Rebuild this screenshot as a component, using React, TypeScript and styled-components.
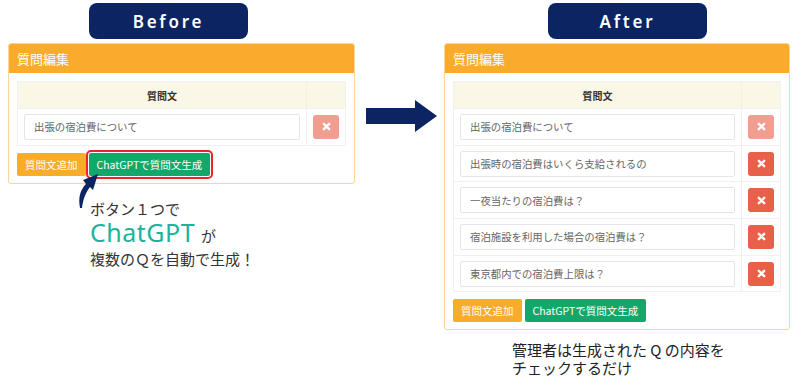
import React from "react";
import styled, { createGlobalStyle } from "styled-components";

const GlobalStyle = createGlobalStyle`
  body {
    margin: 0;
    background: #ffffff;
    font-family: "Noto Sans CJK JP", "Noto Sans", sans-serif;
  }
`;

const Page = styled.div`
  width: 800px;
  height: 380px;
  display: flex;
  align-items: flex-start;
  padding-top: 3px;
  box-sizing: border-box;
  overflow: hidden;
`;

const Column = styled.div<{ $left: number; $width: number }>`
  margin-left: ${(p) => p.$left}px;
  width: ${(p) => p.$width}px;
  display: flex;
  flex-direction: column;
`;

const Badge = styled.div<{ $offset: number }>`
  margin-left: ${(p) => p.$offset}px;
  width: 159px;
  height: 36px;
  border-radius: 8px;
  background: #0c2462;
  color: #ffffff;
  display: flex;
  align-items: center;
  justify-content: center;
  font-family: "Noto Sans", sans-serif;
  font-weight: 600;
  font-size: 17px;
  letter-spacing: 2.8px;
`;

const Panel = styled.div`
  margin-top: 4px;
  border: 1px solid #fad69c;
  border-radius: 3px;
  background: #ffffff;
  overflow: hidden;
`;

const PanelHeader = styled.div`
  height: 29px;
  background: #f9ab2b;
  color: #ffffff;
  font-size: 13px;
  display: flex;
  align-items: center;
  padding-left: 8px;
`;

const PanelBody = styled.div`
  padding: 8px 8px 7px;
`;

const Table = styled.div`
  border: 1px solid #f1f1f1;
  border-bottom: none;
  display: grid;
  grid-template-columns: 1fr 39px;
`;

const HeadCell = styled.div<{ $divider?: boolean }>`
  height: 26px;
  background: #fbf7e7;
  display: flex;
  align-items: center;
  justify-content: center;
  font-size: 10px;
  font-weight: 700;
  color: #333333;
  border-left: ${(p) => (p.$divider ? "1px solid #f4f0df" : "none")};
`;

const Cell = styled.div<{ $divider?: boolean }>`
  height: 35.7px;
  border-top: 1px solid #f0f0f0;
  border-bottom: 0;
  border-left: ${(p) => (p.$divider ? "1px solid #f0f0f0" : "none")};
  display: flex;
  align-items: center;
  justify-content: center;
  padding: 0 6px;
`;

const TableEnd = styled.div`
  grid-column: 1 / -1;
  height: 1px;
  background: #f0f0f0;
`;

const Input = styled.div`
  flex: 1;
  height: 24px;
  border: 1px solid #e3e5ec;
  border-radius: 2px;
  display: flex;
  align-items: center;
  padding-left: 9px;
  font-size: 10.4px;
  color: #666666;
  white-space: nowrap;
`;

const DeleteButton = styled.div<{ $faded?: boolean }>`
  width: 26px;
  height: 24px;
  flex: none;
  border-radius: 3px;
  background: ${(p) => (p.$faded ? "#f19e91" : "#e9604a")};
  display: flex;
  align-items: center;
  justify-content: center;
`;

const Actions = styled.div`
  display: flex;
  gap: 3px;
  margin-top: 7px;
`;

const ActionButton = styled.div<{ $tone: "orange" | "green"; $marked?: boolean }>`
  height: 23px;
  padding: 0 8px;
  border-radius: 2px;
  background: ${(p) => (p.$tone === "orange" ? "#f9ab2b" : "#13a86a")};
  color: #ffffff;
  font-size: 10.5px;
  display: flex;
  align-items: center;
  white-space: nowrap;
  outline: ${(p) => (p.$marked ? "2px solid #e8262a" : "none")};
  outline-offset: 1px;
`;

const Callout = styled.div`
  position: relative;
  margin-top: 15px;
  margin-left: 82px;
  color: #333333;
  font-size: 15px;
`;

const CalloutLine = styled.div`
  line-height: 20px;
`;

const BigLine = styled.div`
  line-height: 26px;
  display: flex;
  align-items: baseline;
  gap: 6px;
`;

const Teal = styled.span`
  font-family: "Noto Sans", sans-serif;
  font-size: 25px;
  color: #1ab39c;
  letter-spacing: 0.5px;
`;

const PointerArrow = styled.svg`
  position: absolute;
  left: -12px;
  top: -31px;
`;

const ArrowBox = styled.div`
  margin-left: 11px;
  margin-top: 97px;
  width: 72px;
  height: 32px;
`;

const Note = styled.div`
  margin-top: 11px;
  margin-left: 68px;
  font-size: 15px;
  line-height: 18px;
  color: #222222;
`;

const Cross = () => (
  <svg width="9" height="9" viewBox="0 0 10 10">
    <path d="M2 2 L8 8 M8 2 L2 8" stroke="#ffffff" strokeWidth="2.6" strokeLinecap="round" />
  </svg>
);

type Row = { text: string; faded?: boolean };

const EditorPanel = ({ rows, marked }: { rows: Row[]; marked?: boolean }) => (
  <Panel>
    <PanelHeader>質問編集</PanelHeader>
    <PanelBody>
      <Table>
        <HeadCell>質問文</HeadCell>
        <HeadCell $divider />
        {rows.map((row) => (
          <React.Fragment key={row.text}>
            <Cell>
              <Input>{row.text}</Input>
            </Cell>
            <Cell $divider>
              <DeleteButton $faded={row.faded}>
                <Cross />
              </DeleteButton>
            </Cell>
          </React.Fragment>
        ))}
        <TableEnd />
      </Table>
      <Actions>
        <ActionButton $tone="orange">質問文追加</ActionButton>
        <ActionButton $tone="green" $marked={marked}>
          ChatGPTで質問文生成
        </ActionButton>
      </Actions>
    </PanelBody>
  </Panel>
);

const beforeRows: Row[] = [{ text: "出張の宿泊費について", faded: true }];

const afterRows: Row[] = [
  { text: "出張の宿泊費について", faded: true },
  { text: "出張時の宿泊費はいくら支給されるの" },
  { text: "一夜当たりの宿泊費は？" },
  { text: "宿泊施設を利用した場合の宿泊費は？" },
  { text: "東京都内での宿泊費上限は？" },
];

export default function App() {
  return (
    <>
      <GlobalStyle />
      <Page>
        <Column $left={8} $width={347}>
          <Badge $offset={81}>Before</Badge>
          <EditorPanel rows={beforeRows} marked />
          <Callout>
            <PointerArrow width="30" height="42" viewBox="0 0 30 42">
              <path d="M2 40 C0 30 2 22 8 16 L5 12 L20 6 L15 22 L12 19 C8 24 5 31 4 40 Z" fill="#0c2462" />
            </PointerArrow>
            <CalloutLine>ボタン１つで</CalloutLine>
            <BigLine>
              <Teal>ChatGPT</Teal>
              <span>が</span>
            </BigLine>
            <CalloutLine>複数のＱを自動で生成！</CalloutLine>
          </Callout>
        </Column>
        <ArrowBox>
          <svg width="72" height="32" viewBox="0 0 72 32">
            <path d="M0 8 L49 8 L49 0 L71 16 L49 32 L49 24 L0 24 Z" fill="#0c2462" />
          </svg>
        </ArrowBox>
        <Column $left={6} $width={346}>
          <Badge $offset={104}>After</Badge>
          <EditorPanel rows={afterRows} />
          <Note>
            管理者は生成された Q の内容を
            <br />
            チェックするだけ
          </Note>
        </Column>
      </Page>
    </>
  );
}
